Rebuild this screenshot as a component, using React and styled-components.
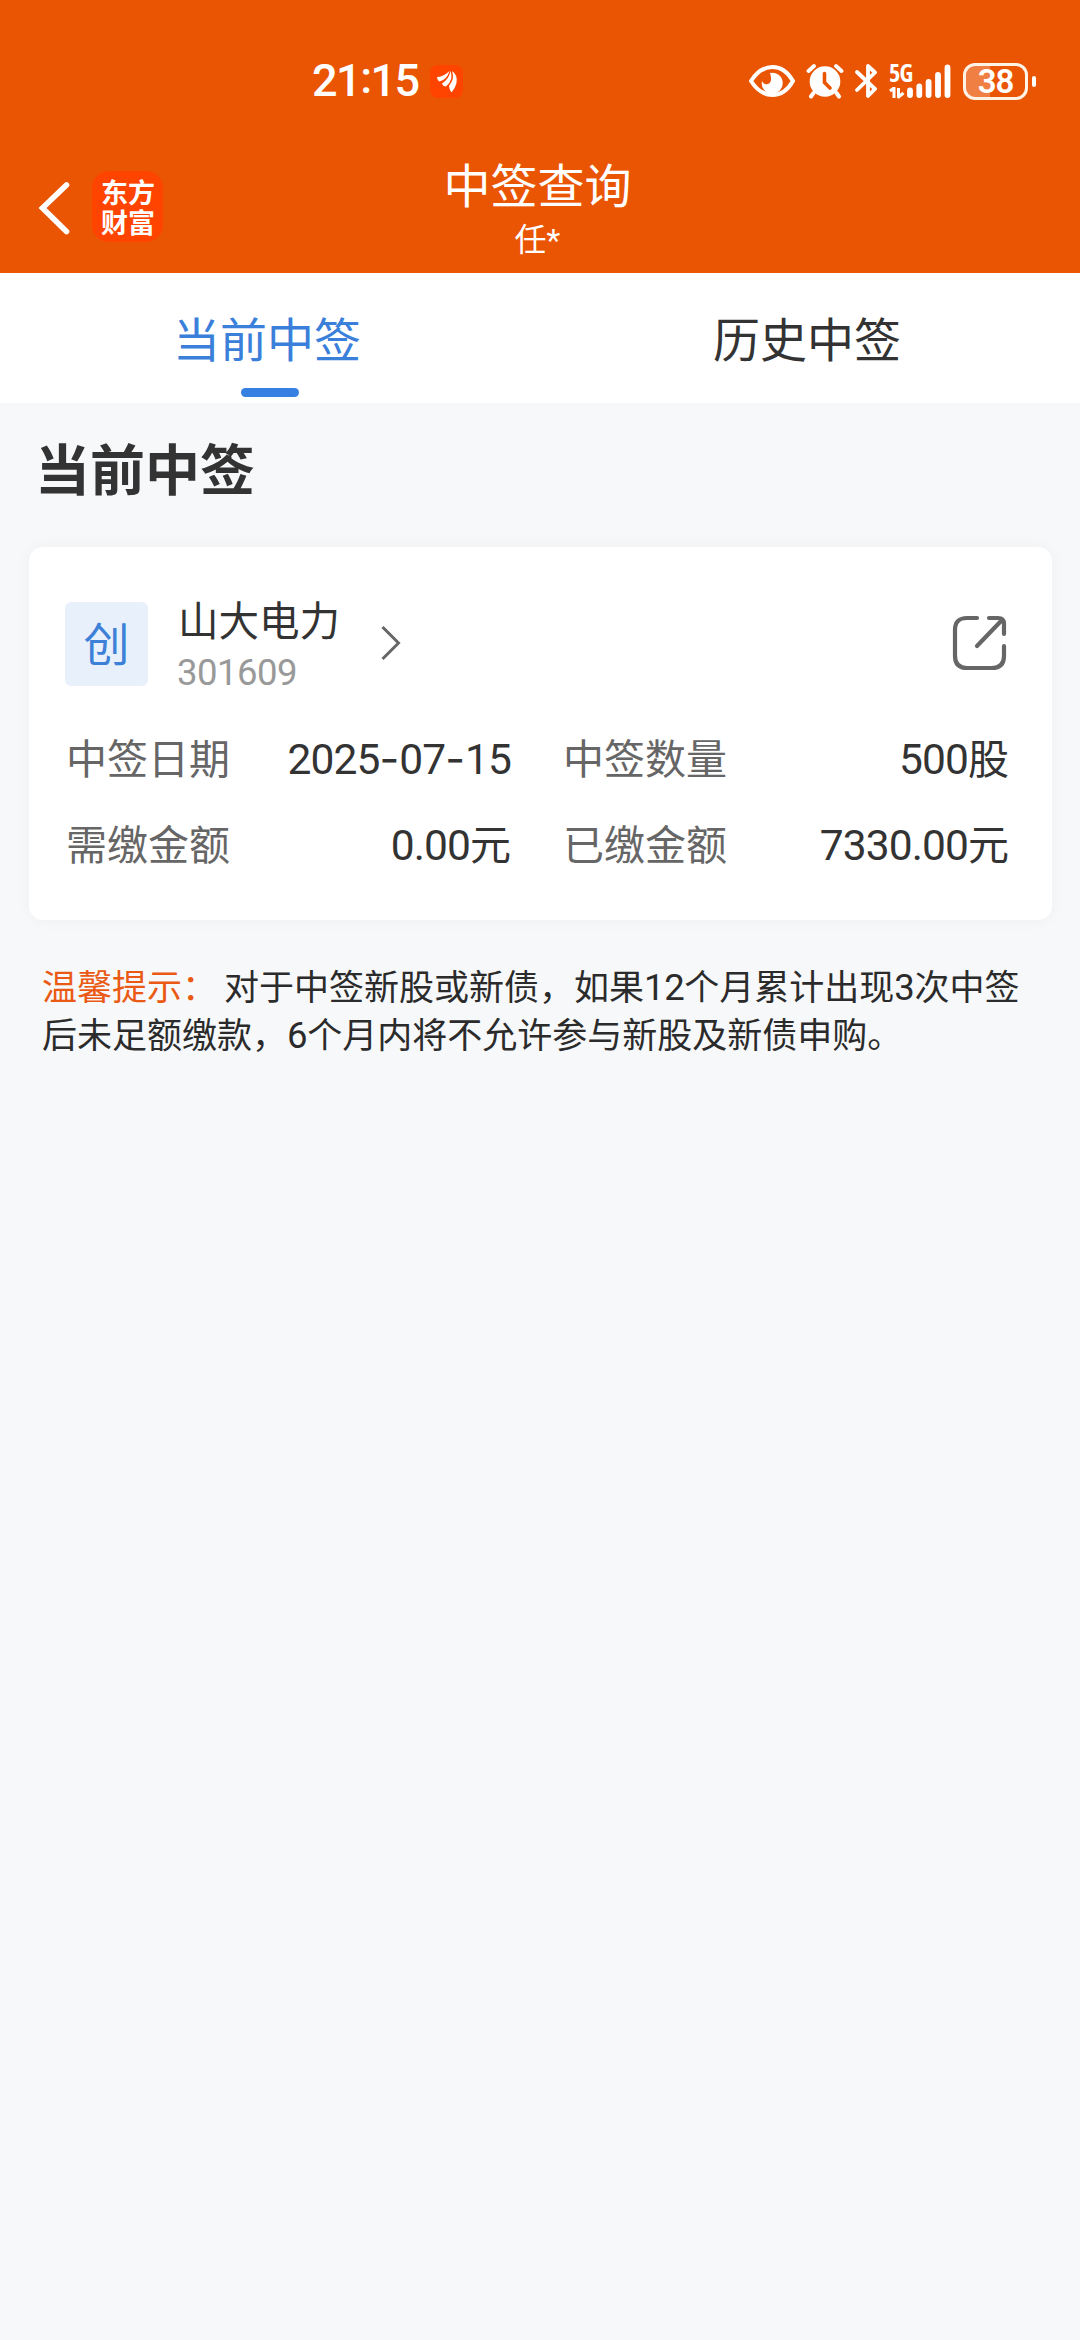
import React from "react";
import styled, { createGlobalStyle } from "styled-components";

const GlobalStyle = createGlobalStyle`
  * { box-sizing: border-box; }
  body {
    margin: 0;
    background: #f7f8fa;
    font-family: Roboto, "Noto Sans CJK SC", sans-serif;
    color: #333;
  }
  svg { display: block; flex: none; }
`;

const Screen = styled.div`
  width: 1080px;
  min-height: 2340px;
  background: #f7f8fa;
  display: flex;
  flex-direction: column;
`;

const Header = styled.header`
  height: 273px;
  background: #ea5504;
  color: #fff;
`;

const StatusBar = styled.div`
  height: 150px;
  padding: 12px 44px 0 312px;
  display: flex;
  align-items: center;
  justify-content: space-between;
`;

const Group = styled.div`
  display: flex;
  align-items: center;
  gap: ${(p) => p.$gap || 0}px;
`;

const Clock = styled.span`
  font-size: 45px;
  line-height: 50px;
  font-weight: 500;
  letter-spacing: -1.5px;
  width: 106px;
  white-space: nowrap;
`;

const Colon = styled.span`
  position: relative;
  top: -3px;
`;

const AppBadge = styled.span`
  width: 33px;
  height: 33px;
  border-radius: 8px;
  background: #ff4400;
  display: grid;
  place-items: center;
`;

const StatusIcon = styled.svg`
  margin-left: ${(p) => p.$before || 0}px;
`;

const Network = styled.div`
  display: flex;
  align-items: flex-end;
  width: 62px;
  height: 36px;
  margin-left: 10.5px;
`;

const NetworkLabel = styled.div`
  width: 18px;
  height: 36px;
  display: flex;
  flex-direction: column;
  justify-content: space-between;
  font-size: 24px;
  line-height: 20px;
  font-weight: 700;
  letter-spacing: -0.8px;
  white-space: nowrap;
  font-family: "Open Sans", sans-serif;
  font-stretch: condensed;
`;

const Battery = styled.div`
  display: flex;
  align-items: center;
  gap: 4px;
  margin-left: 12px;
`;

const BatteryBody = styled.div`
  width: 65px;
  height: 37px;
  border: 3px solid #fff3e6;
  border-radius: 12px;
  background: linear-gradient(90deg, #f07f43 0 40%, transparent 40%);
  text-align: center;
  font-size: 33px;
  line-height: 32px;
  font-weight: 600;
  letter-spacing: -1px;
`;

const BatteryTip = styled.span`
  width: 4px;
  height: 11px;
  border-radius: 2px;
  background: #fff;
`;

const NavBar = styled.div`
  height: 123px;
  padding-right: 5px;
  display: grid;
  grid-template-columns: 1fr auto 1fr;
`;

const NavLeft = styled.div`
  display: flex;
  align-items: flex-start;
  gap: 22px;
  padding: 21px 0 0 37px;
`;

const BackIcon = styled.svg`
  margin-top: 10px;
`;

const BrandLogo = styled.div`
  width: 71px;
  height: 71px;
  border-radius: 17px;
  background: #ff4400;
  font-size: 27px;
  line-height: 30px;
  font-weight: 700;
  padding: 8px 0 0 9px;
`;

const TitleBlock = styled.div`
  padding-top: 8px;
  text-align: center;
`;

const Title = styled.h1`
  margin: 0;
  font-size: 47px;
  line-height: 57px;
  font-weight: 400;
`;

const Subtitle = styled.div`
  margin-top: 3px;
  font-size: 32px;
  line-height: 44px;
`;

const Tabs = styled.nav`
  height: 130px;
  background: #fff;
  display: grid;
  grid-template-columns: 1fr 1fr;
`;

const Tab = styled.div`
  padding-top: 38px;
  display: flex;
  flex-direction: column;
  align-items: center;
  font-size: 47px;
  line-height: 60px;
  color: ${(p) => (p.$active ? "#3a80db" : "#333")};

  &::after {
    content: "";
    width: 58px;
    height: 9px;
    margin-top: 17px;
    border-radius: 5px;
    background: ${(p) => (p.$active ? "#3580e0" : "transparent")};
  }
`;

const TabLabel = styled.span`
  margin-right: 6px;
`;

const SectionTitle = styled.h2`
  margin: 33px 0 41px 35px;
  font-size: 55px;
  line-height: 70px;
  font-weight: 700;
`;

const Card = styled.section`
  margin: 0 28px 0 29px;
  height: 373px;
  padding: 48px 44px 0 36px;
  border-radius: 14px;
  background: #fff;
  box-shadow: 0 0 16px rgba(0, 0, 0, 0.04);
`;

const StockRow = styled.div`
  display: flex;
  align-items: flex-start;
  height: 104px;
`;

const Board = styled.div`
  width: 83px;
  height: 84px;
  margin-top: 7px;
  border-radius: 6px;
  background: #e8f1fb;
  color: #3d80d8;
  font-size: 46px;
  line-height: 86px;
  text-align: center;
`;

const Stock = styled.div`
  margin-left: 29px;
  width: 203px;
`;

const StockName = styled.div`
  padding-left: 1px;
  font-size: 40.5px;
  line-height: 54px;
`;

const StockCode = styled.div`
  font-size: 36.5px;
  line-height: 48px;
  letter-spacing: -0.5px;
  color: #999;
`;

const ChevronIcon = styled.svg`
  margin-top: 30px;
`;

const ShareIcon = styled.svg`
  margin: 19px 1px 0 auto;
`;

const Details = styled.dl`
  margin: 33px 0 0 1px;
  display: grid;
  grid-template-columns: 445px 446px;
  column-gap: 52px;
  row-gap: 30px;
`;

const Detail = styled.div`
  display: flex;
  justify-content: space-between;
  height: 56px;
  font-size: 41px;
  line-height: 56px;
  white-space: nowrap;
`;

const Label = styled.dt`
  color: #666;
`;

const Value = styled.dd`
  margin: 0;
`;

const Digits = styled.span`
  font-size: 42.5px;
  line-height: 1;
  letter-spacing: -0.9px;
`;

const Dash = styled.span`
  font-family: Inter, sans-serif;
  font-size: 43px;
  line-height: 1;
  letter-spacing: 0;
`;

const Tip = styled.p`
  margin: 45px 0 0 42px;
  font-size: 35px;
  line-height: 47.8px;
  color: #2b2b2b;
  white-space: nowrap;
`;

const TipLead = styled.span`
  color: #ea5a14;
  margin-right: 7px;
`;

const SmallDigits = styled.span`
  font-size: 36.5px;
  line-height: 1;
  letter-spacing: -0.4px;
`;

const details = [
  ["中签日期", ["2025", "07", "15"], ""],
  ["中签数量", ["500"], "股"],
  ["需缴金额", ["0.00"], "元"],
  ["已缴金额", ["7330.00"], "元"],
];

function StatusIcons() {
  return (
    <Group>
      <StatusIcon width="48" height="36" viewBox="0 0 48 36">
        <path d="M3 18Q12 4 24.500 4Q37 4 45 18Q37 32 24.500 32Q12 32 3 18Z" fill="none" stroke="#fff" strokeWidth="4" strokeLinejoin="round" />
        <path d="M22 10A10.500 10.500 0 1 1 14 18Q16 22 20 21Q25 19 22 10Z" fill="#fff" />
      </StatusIcon>
      <StatusIcon $before={10} width="38" height="36" viewBox="0 0 38 36">
        <circle cx="19" cy="18.500" r="15.300" fill="#fff" />
        <path d="M2.500 8L8 3M35.500 8L30 3" stroke="#fff" strokeWidth="3.800" strokeLinecap="round" />
        <path d="M7.500 30L5 33.500M30.500 30L33 33.500" stroke="#fff" strokeWidth="4" strokeLinecap="round" />
        <path d="M18.500 10.500V19.500L24 25" fill="none" stroke="#ea5504" strokeWidth="3.600" strokeLinecap="round" />
      </StatusIcon>
      <StatusIcon $before={10.5} width="24" height="36" viewBox="0 0 24 36">
        <path d="M2 9L20 26L13 33V3L20 9.500L2 27" fill="none" stroke="#fff" strokeWidth="3.800" strokeLinejoin="round" strokeLinecap="round" />
      </StatusIcon>
      <Network>
        <NetworkLabel>
          5G
          <svg width="16" height="12" viewBox="0 0 16 12">
            <path d="M1 4L5 1V11M9.500 1V10L14.500 6" fill="none" stroke="#fff" strokeWidth="3" strokeLinejoin="round" />
          </svg>
        </NetworkLabel>
        <svg width="44" height="36" viewBox="0 0 44 36">
          <path d="M3 27.500V32M12.300 23.500V32M21.600 19V32M31 12V32M40.500 4.500V32" stroke="#fff" strokeWidth="5.800" strokeLinecap="round" />
        </svg>
      </Network>
      <Battery>
        <BatteryBody>38</BatteryBody>
        <BatteryTip />
      </Battery>
    </Group>
  );
}

export default function App() {
  return (
    <Screen>
      <GlobalStyle />
      <Header>
        <StatusBar>
          <Group $gap={12}>
            <Clock>21<Colon>:</Colon>15</Clock>
            <AppBadge>
              <svg width="33" height="33" viewBox="0 0 33 33" fill="#fff">
                <path d="M7 12Q13 12 19.500 6Q17 14.500 9.500 16.500Q7 15 7 12Z" />
                <path d="M12 18.500Q19 14 20.500 6Q24 15 16 21.500Q13 21.500 12 18.500Z" />
                <path d="M22 6Q28 10 26.500 18Q25 24 21.500 27.500Q19.500 25 19 21Q25 14 22 6Z" />
              </svg>
            </AppBadge>
          </Group>
          <StatusIcons />
        </StatusBar>
        <NavBar>
          <NavLeft>
            <BackIcon width="33" height="54" viewBox="0 0 33 54">
              <path d="M29.500 4L5.500 27L29.500 50.500" fill="none" stroke="#fff" strokeWidth="5.600" strokeLinecap="round" />
            </BackIcon>
            <BrandLogo>东方<br />财富</BrandLogo>
          </NavLeft>
          <TitleBlock>
            <Title>中签查询</Title>
            <Subtitle>任*</Subtitle>
          </TitleBlock>
        </NavBar>
      </Header>
      <Tabs>
        <Tab $active><TabLabel>当前中签</TabLabel></Tab>
        <Tab><TabLabel>历史中签</TabLabel></Tab>
      </Tabs>
      <SectionTitle>当前中签</SectionTitle>
      <Card>
        <StockRow>
          <Board>创</Board>
          <Stock>
            <StockName>山大电力</StockName>
            <StockCode>301609</StockCode>
          </Stock>
          <ChevronIcon width="22" height="36" viewBox="0 0 22 36">
            <path d="M2.500 2L18.500 18L2.500 34" fill="none" stroke="#666" strokeWidth="3" />
          </ChevronIcon>
          <ShareIcon width="56" height="58" viewBox="0 0 56 58" fill="none" stroke="#666" strokeWidth="4.200" strokeLinecap="round">
            <path d="M26 4H16Q4 4 4 16V42Q4 54 16 54H41Q53 54 53 42V32" />
            <path d="M38 4H47Q53 4 53 10V20M51 6L26 32" />
          </ShareIcon>
        </StockRow>
        <Details>
          {details.map(([label, parts, unit]) => (
            <Detail key={label}>
              <Label>{label}</Label>
              <Value>
                <Digits>
                  {parts.map((part, i) => (
                    <React.Fragment key={i}>
                      {i > 0 && <Dash>-</Dash>}
                      {part}
                    </React.Fragment>
                  ))}
                </Digits>
                {unit}
              </Value>
            </Detail>
          ))}
        </Details>
      </Card>
      <Tip>
        <TipLead>温馨提示：</TipLead>对于中签新股或新债，如果<SmallDigits>12</SmallDigits>个月累计出现<SmallDigits>3</SmallDigits>次中签
        <br />
        后未足额缴款，<SmallDigits>6</SmallDigits>个月内将不允许参与新股及新债申购。
      </Tip>
    </Screen>
  );
}
